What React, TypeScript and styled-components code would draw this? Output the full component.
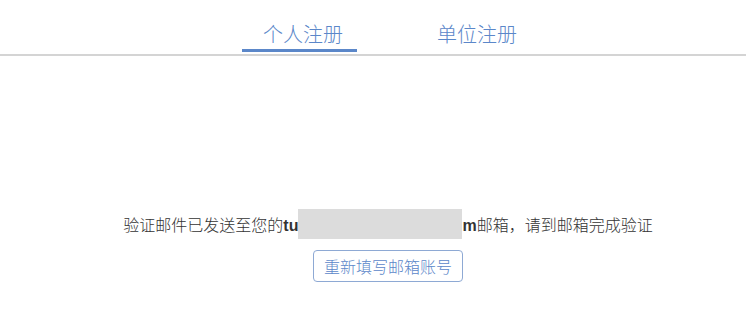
import React, { useState } from 'react';
import styled, { createGlobalStyle } from 'styled-components';

const GlobalStyle = createGlobalStyle`
  html, body {
    margin: 0;
    padding: 0;
    background: #ffffff;
    font-family: "Liberation Sans", "Noto Sans CJK SC", sans-serif;
  }
`;

const Page = styled.div`
  width: 100%;
  min-height: 324px;
  background: #fff;
`;

const TabBar = styled.nav`
  display: flex;
  justify-content: center;
  gap: 59px;
  padding-left: 27px;
  padding-bottom: 2px;
  border-bottom: 2px solid #d4d4d4;
`;

const Tab = styled.button<{ $active?: boolean }>`
  appearance: none;
  background: none;
  border: none;
  border-bottom: 3px solid ${(p) => (p.$active ? '#5b87c9' : 'transparent')};
  padding: 21px 14px 2px 21px;
  margin: 0;
  font-family: "Noto Sans CJK SC", sans-serif;
  font-size: 20px;
  font-weight: 300;
  line-height: 26px;
  color: #5b87c9;
  cursor: pointer;
`;

const Content = styled.section`
  display: flex;
  flex-direction: column;
  align-items: center;
  padding-top: 153px;
  padding-left: 30px;
`;

const Message = styled.p`
  margin: 0;
  font-size: 16px;
  font-weight: 300;
  line-height: 30px;
  color: #333;
  font-family: "Noto Sans CJK SC", sans-serif;
  white-space: nowrap;
`;

const Bold = styled.b`
  font-family: "Liberation Sans", Arial, sans-serif;
  font-weight: bold;
`;

const Masked = styled.span`
  display: inline-block;
  width: 164px;
  height: 30px;
  vertical-align: top;
  background: #dcdcdc;
`;

const ResetButton = styled.button`
  margin-top: 9px;
  height: 32px;
  padding: 0 10px;
  border: 1px solid #8ea9d4;
  border-radius: 4px;
  background: #fff;
  color: #5b87c9;
  font-family: "Noto Sans CJK SC", sans-serif;
  font-size: 16px;
  font-weight: 300;
  line-height: 30px;
  cursor: pointer;
`;

const tabs = ['个人注册', '单位注册'];

export default function App() {
  const [active, setActive] = useState(0);

  return (
    <Page>
      <GlobalStyle />
      <TabBar>
        {tabs.map((t, i) => (
          <Tab key={t} $active={active === i} onClick={() => setActive(i)}>
            {t}
          </Tab>
        ))}
      </TabBar>
      <Content>
        <Message>
          验证邮件已发送至您的<Bold>tu</Bold>
          <Masked />
          <Bold>m</Bold>邮箱，请到邮箱完成验证
        </Message>
        <ResetButton>重新填写邮箱账号</ResetButton>
      </Content>
    </Page>
  );
}
